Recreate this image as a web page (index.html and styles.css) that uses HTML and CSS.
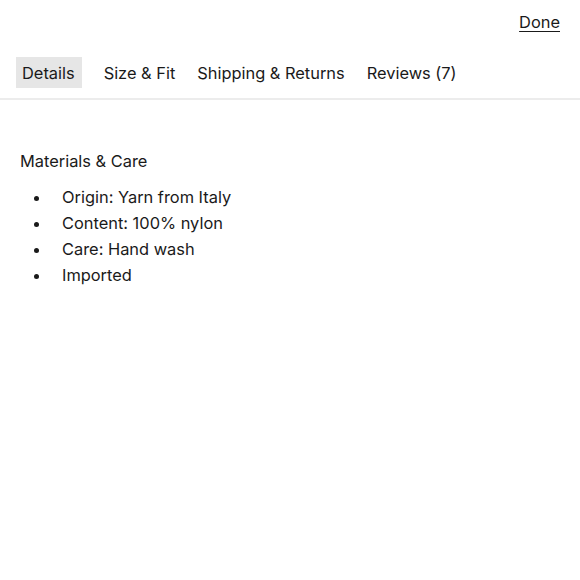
FILE: index.html
```html
<!DOCTYPE html>
<html>
<head>
<meta charset="utf-8">
<link rel="stylesheet" href="styles.css">
</head>
<body>
<header class="top">
  <a class="done" href="#">Done</a>
</header>
<nav class="tabs">
  <span class="tab active">Details</span>
  <span class="tab">Size &amp; Fit</span>
  <span class="tab">Shipping &amp; Returns</span>
  <span class="tab">Reviews (7)</span>
</nav>
<main class="content">
  <h2 class="heading">Materials &amp; Care</h2>
  <ul class="list">
    <li>Origin: Yarn from Italy</li>
    <li>Content: 100% nylon</li>
    <li>Care: Hand wash</li>
    <li>Imported</li>
  </ul>
</main>
</body>
</html>
```
FILE: styles.css
```css
html, body {
  margin: 0;
  padding: 0;
  background: #fff;
  color: #1a1a1a;
  font-family: "Inter", "Noto Sans", sans-serif;
  font-size: 16.4px;
}
.top {
  display: flex;
  justify-content: flex-end;
  padding: 11px 20px 0 0;
  height: 46px;
  box-sizing: border-box;
}
.done {
  color: #1a1a1a;
  text-decoration: underline;
  text-underline-offset: 3px;
  line-height: 22px;
}
.tabs {
  display: flex;
  align-items: center;
  gap: 10px;
  padding: 11px 16px 10px;
  border-bottom: 2px solid #ececec;
}
.tab {
  height: 31px;
  line-height: 33px;
  padding: 0 6px;
}
.tab.active {
  background: #e6e6e6;
  padding: 0 7px 0 6px;
  margin-right: 6px;
}
.content {
  padding: 50px 20px 0;
}
.heading {
  margin: 0 0 12px;
  font-size: 16.4px;
  font-weight: 400;
  line-height: 22px;
}
.list {
  margin: 0;
  padding: 0;
  list-style: none;
  line-height: 26px;
}
.list li {
  display: flex;
  align-items: center;
}
.list li::before {
  content: "";
  width: 5px;
  height: 5px;
  border-radius: 50%;
  background: #1a1a1a;
  margin: 2px 23px 0 14px;
  flex: none;
}
```
